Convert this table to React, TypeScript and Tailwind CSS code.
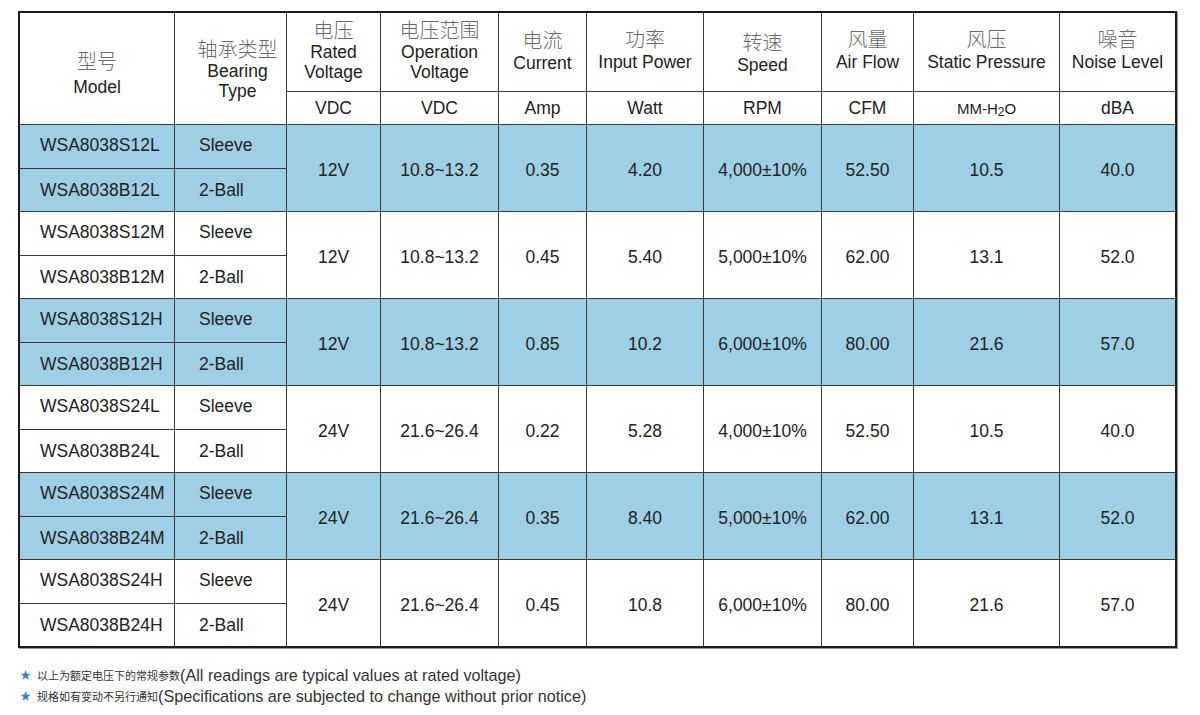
import React from "react";

const groups = [
  { blue: true, m1: "WSA8038S12L", m2: "WSA8038B12L", v: ["12V", "10.8~13.2", "0.35", "4.20", "4,000±10%", "52.50", "10.5", "40.0"] },
  { blue: false, m1: "WSA8038S12M", m2: "WSA8038B12M", v: ["12V", "10.8~13.2", "0.45", "5.40", "5,000±10%", "62.00", "13.1", "52.0"] },
  { blue: true, m1: "WSA8038S12H", m2: "WSA8038B12H", v: ["12V", "10.8~13.2", "0.85", "10.2", "6,000±10%", "80.00", "21.6", "57.0"] },
  { blue: false, m1: "WSA8038S24L", m2: "WSA8038B24L", v: ["24V", "21.6~26.4", "0.22", "5.28", "4,000±10%", "52.50", "10.5", "40.0"] },
  { blue: true, m1: "WSA8038S24M", m2: "WSA8038B24M", v: ["24V", "21.6~26.4", "0.35", "8.40", "5,000±10%", "62.00", "13.1", "52.0"] },
  { blue: false, m1: "WSA8038S24H", m2: "WSA8038B24H", v: ["24V", "21.6~26.4", "0.45", "10.8", "6,000±10%", "80.00", "21.6", "57.0"] },
];

const CN = "font-['Noto_Sans_CJK_SC',sans-serif] text-[20px] font-light text-[#6a6a6a] leading-[22px]";

function Head({ cn, en, extra = "", cnExtra = "" }: { cn: string; en: string[]; extra?: string; cnExtra?: string }) {
  return (
    <div className={`bg-white flex flex-col items-center justify-center text-center ${extra}`}>
      <div className={`${CN} ${cnExtra}`}>{cn}</div>
      {en.map((e) => (
        <div key={e} className="leading-[20px] whitespace-nowrap">{e}</div>
      ))}
    </div>
  );
}

export default function App() {
  return (
    <div className="w-[1200px] h-[715px] bg-white pt-[11px] pl-[18px] font-['Liberation_Sans','Noto_Sans_CJK_SC',sans-serif] text-[#222] text-[17.5px]">
      <div className="w-fit border-2 border-[#1c1c1c] shadow-[1px_1px_0_#9a9a9a]">
        <div className="grid grid-cols-[154px_111px_93px_117px_87px_116px_117px_91px_145px_115px] grid-rows-[78px_32px_repeat(6,43px_42px)] gap-px bg-[#3a3a3a]">
          <Head cn="型号" en={["Model"]} extra="row-span-2 pt-[9px]" cnExtra="mb-[5px]" />
          <Head cn="轴承类型" en={["Bearing", "Type"]} extra="row-span-2 pl-[14px] pt-[2px]" cnExtra="mb-[1px]" />
          <Head cn="电压" en={["Rated", "Voltage"]} extra="pb-[3px]" cnExtra="mb-[1px]" />
          <Head cn="电压范围" en={["Operation", "Voltage"]} extra="pb-[3px]" cnExtra="mb-[1px]" />
          <Head cn="电流" en={["Current"]} extra="pb-[3px]" cnExtra="mb-[2px]" />
          <Head cn="功率" en={["Input Power"]} extra="pb-[5px]" cnExtra="mb-[2px]" />
          <Head cn="转速" en={["Speed"]} extra="pt-[1px]" cnExtra="mb-[2px]" />
          <Head cn="风量" en={["Air Flow"]} extra="pb-[5px]" cnExtra="mb-[2px]" />
          <Head cn="风压" en={["Static Pressure"]} extra="pb-[4px]" cnExtra="mb-[2px]" />
          <Head cn="噪音" en={["Noise Level"]} extra="pb-[5px]" cnExtra="mb-[2px]" />

          <div className="bg-white flex items-center justify-center">VDC</div>
          <div className="bg-white flex items-center justify-center">VDC</div>
          <div className="bg-white flex items-center justify-center">Amp</div>
          <div className="bg-white flex items-center justify-center">Watt</div>
          <div className="bg-white flex items-center justify-center">RPM</div>
          <div className="bg-white flex items-center justify-center">CFM</div>
          <div className="bg-white flex items-center justify-center text-[15px] pt-[2px]">
            MM-H<span className="text-[12px] relative top-[3px]">2</span>O
          </div>
          <div className="bg-white flex items-center justify-center">dBA</div>

          {groups.map((g, gi) => {
            const bg = g.blue ? "bg-[#9fcfe4]" : "bg-white";
            return (
              <React.Fragment key={gi}>
                <div className={`${bg} flex items-center pl-[20px] pb-[2px]`}>{g.m1}</div>
                <div className={`${bg} flex items-center pl-[24px] pb-[2px]`}>Sleeve</div>
                {g.v.map((v, i) => (
                  <div key={i} className={`${bg} row-span-2 flex items-center justify-center pt-[4px]`}>
                    {v}
                  </div>
                ))}
                <div className={`${bg} flex items-center pl-[20px]`}>{g.m2}</div>
                <div className={`${bg} flex items-center pl-[24px]`}>2-Ball</div>
              </React.Fragment>
            );
          })}
        </div>
      </div>

      <div className="mt-[17px] text-[#333] text-[16.2px] leading-[21px]">
        <div className="flex items-center">
          <span className="w-[19px] pl-[2px] text-[#3b7fc6] text-[11px]">★</span>
          <span className="font-['Noto_Sans_CJK_SC',sans-serif] text-[11px]">以上为额定电压下的常规参数</span>
          <span>(All readings are typical values at rated voltage)</span>
        </div>
        <div className="flex items-center">
          <span className="w-[19px] pl-[2px] text-[#3b7fc6] text-[11px]">★</span>
          <span className="font-['Noto_Sans_CJK_SC',sans-serif] text-[11px]">规格如有变动不另行通知</span>
          <span>(Specifications are subjected to change without prior notice)</span>
        </div>
      </div>
    </div>
  );
}
